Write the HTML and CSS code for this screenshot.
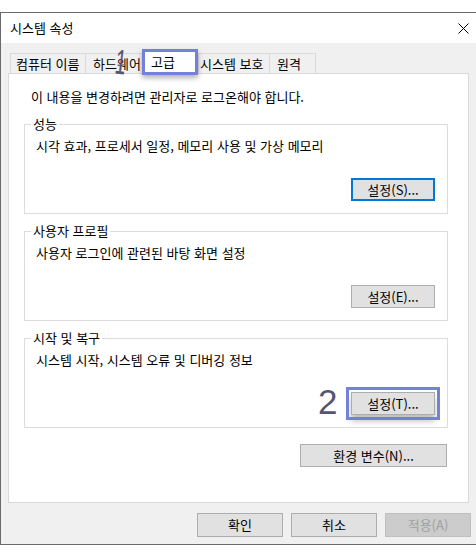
FILE: index.html
```html
<!DOCTYPE html>
<html lang="ko">
<head>
<meta charset="utf-8">
<title>시스템 속성</title>
<link rel="stylesheet" href="styles.css">
</head>
<body>
<div class="window">
  <div class="titlebar">
    <span class="title">시스템 속성</span>
    <svg class="close" width="11" height="11" viewBox="0 0 11 11"><path d="M0.5 0.5 L10.5 10.5 M10.5 0.5 L0.5 10.5" stroke="#000" stroke-width="1" fill="none"/></svg>
  </div>
  <div class="client">
    <div class="tabs">
      <div class="tab tab-name">컴퓨터 이름</div>
      <div class="tab tab-hw">하드웨어</div>
      <div class="tab tab-adv selected">고급</div>
      <div class="tab tab-prot">시스템 보호</div>
      <div class="tab tab-remote">원격</div>
    </div>
    <div class="panel">
      <p class="intro">이 내용을 변경하려면 관리자로 로그온해야 합니다.</p>
      <fieldset class="group">
        <legend>성능</legend>
        <p class="desc">시각 효과, 프로세서 일정, 메모리 사용 및 가상 메모리</p>
        <div class="actions"><button class="btn btn-default">설정(S)...</button></div>
      </fieldset>
      <fieldset class="group">
        <legend>사용자 프로필</legend>
        <p class="desc">사용자 로그인에 관련된 바탕 화면 설정</p>
        <div class="actions"><button class="btn">설정(E)...</button></div>
      </fieldset>
      <fieldset class="group">
        <legend>시작 및 복구</legend>
        <p class="desc">시스템 시작, 시스템 오류 및 디버깅 정보</p>
        <div class="actions"><button class="btn btn-marked">설정(T)...</button></div>
      </fieldset>
      <div class="env-row"><button class="btn btn-env">환경 변수(N)...</button></div>
    </div>
    <div class="dialog-buttons">
      <button class="btn btn-dialog">확인</button>
      <button class="btn btn-dialog">취소</button>
      <button class="btn btn-dialog btn-disabled">적용(A)</button>
    </div>
  </div>
  <span class="mark mark-1">1</span>
  <span class="mark mark-2">2</span>
</div>
</body>
</html>
```
FILE: styles.css
```css
* { box-sizing: border-box; }
html, body { margin: 0; padding: 0; overflow: hidden; }
body {
  width: 476px;
  height: 557px;
  padding-top: 12px;
  background: #fff;
  font-family: "Noto Sans CJK KR", "Noto Sans", sans-serif;
  font-size: 13px;
  color: #000;
}
.window {
  position: relative;
  width: 476px;
  border-top: 1px solid #6a6a6a;
  border-left: 1px solid #6a6a6a;
  border-bottom: 1px solid #6a6a6a;
  background: #f0f0f0;
}
.titlebar {
  height: 30px;
  background: #fff;
  display: flex;
  align-items: center;
  justify-content: space-between;
  padding: 0 7px 0 9px;
}
.title { line-height: 16px; }
.close { display: block; }
.client { padding: 6px 7px 7px; }
.tabs {
  display: flex;
  align-items: flex-end;
  height: 24px;
  margin-left: 2px;
}
.tab {
  height: 20px;
  line-height: 19px;
  border: 1px solid #d9d9d9;
  border-right: 0;
  border-bottom: 0;
  white-space: nowrap;
}
.tab-name { width: 75px; padding-left: 5px; }
.tab-hw { width: 58px; padding-left: 7px; }
.tab-prot { width: 71px; padding-left: 1px; }
.tab-remote { width: 47px; padding-left: 7px; border-right: 1px solid #d9d9d9; }
.tab.selected {
  position: relative;
  z-index: 1;
  width: 56px;
  height: 26px;
  margin-left: -1px;
  margin-bottom: -2px;
  padding-left: 6px;
  line-height: 20px;
  background: #fff;
  border: 3px solid #7282d6;
  box-shadow: 0 3px 5px rgba(0, 0, 0, 0.3);
}
.panel {
  background: #fff;
  border: 1px solid #d9d9d9;
  padding: 15px 0 35px;
}
.intro {
  margin: 0 0 11px 22px;
  line-height: 16px;
}
.group {
  margin: 0 20px 0 15px;
  padding: 0 12px 12px 11px;
  border: 1px solid #dcdcdc;
  min-width: 0;
}
.group + .group { margin-top: 9px; }
.group legend {
  margin-left: -5px;
  padding: 0 2px;
  line-height: 16px;
}
.desc {
  margin: 6px 0 0;
  line-height: 16px;
}
.actions {
  display: flex;
  justify-content: flex-end;
  margin-top: 24px;
}
.btn {
  width: 84px;
  height: 23px;
  padding: 0;
  border: 1px solid #adadad;
  background: #e1e1e1;
  font: inherit;
  color: #000;
  line-height: 21px;
  text-align: center;
}
.btn-default { border: 2px solid #0078d7; line-height: 19px; }
.btn-marked {
  outline: 3px solid #7282d6;
  outline-offset: 2px;
  box-shadow: 0 6px 6px rgba(0, 0, 0, 0.25);
}
.env-row {
  display: flex;
  justify-content: flex-end;
  margin-top: 16px;
  padding-right: 21px;
}
.btn-env { width: 147px; }
.dialog-buttons {
  display: flex;
  justify-content: flex-end;
  gap: 8px;
  margin: 10px -2px 0 0;
}
.btn-dialog { width: 86px; height: 24px; line-height: 22px; }
.btn-disabled { background: #cccccc; border-color: #bfbfbf; color: #a0a0a0; }
.mark {
  position: absolute;
  font-family: "Liberation Sans", sans-serif;
  font-size: 35px;
  line-height: 35px;
  color: #555573;
}
.mark-1 { left: 110px; top: 31px; transform: rotate(7deg) scaleX(0.55); }
.mark-2 { left: 317px; top: 371px; }
```
